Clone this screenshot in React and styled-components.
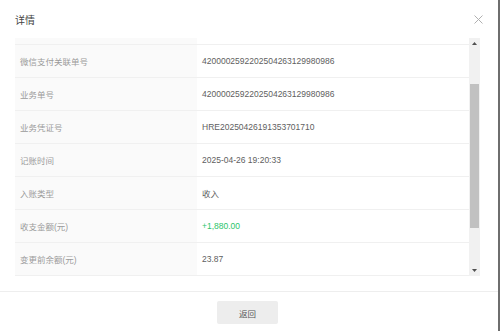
import React from 'react'
import styled, { createGlobalStyle } from 'styled-components'

///Styled Components

const GlobalStyle = createGlobalStyle`
    html, body {
        margin: 0;
        padding: 0;
        background: #ffffff;
    }
    body {
        font-family: "Liberation Sans", "Noto Sans CJK SC", Arial, sans-serif;
    }
`

const Modal = styled.div`
    width: 498px;
    height: 331px;
    display: flex;
    flex-direction: column;
    background: #ffffff;
    border-right: 2px solid #6e6e6e;
`

const Header = styled.div`
    height: 38px;
    flex: none;
    display: flex;
    align-items: center;
    justify-content: space-between;
    padding: 0 15px;
`

const Title = styled.h4`
    margin: 0;
    font-family: "Noto Sans CJK SC", sans-serif;
    font-size: 10px;
    font-weight: normal;
    color: #444;
`

const CloseButton = styled.button`
    border: 0;
    padding: 0;
    background: none;
    width: 9px;
    height: 9px;
    display: flex;
    cursor: pointer;
    color: #b0b0b0;
`

const Body = styled.div`
    display: flex;
    height: 238px;
    padding: 0 18px 0 15px;
`

const Table = styled.div`
    flex: 1;
    display: flex;
    flex-direction: column;
    overflow: hidden;
`

const DetailRow = styled.div`
    display: grid;
    grid-template-columns: 182px 1fr;
    height: ${props => props.height || 33}px;
    flex: none;
    box-sizing: border-box;
    border-bottom: 1px solid #f0f0f0;
    font-size: 8.5px;
`

const Label = styled.div`
    display: flex;
    align-items: center;
    padding-left: 5px;
    background: #fafafa;
    color: #9a9a9a;
`

const Value = styled.div`
    display: flex;
    align-items: center;
    padding-left: 5px;
    color: ${props => props.green ? '#2cc56c' : '#606060'};
`

const ScrollBar = styled.div`
    width: 11px;
    flex: none;
    display: flex;
    flex-direction: column;
    background: #f1f1f1;
`

const ScrollArrow = styled.div`
    height: 11px;
    flex: none;
    display: flex;
    align-items: center;
    justify-content: center;
    color: #505050;
`

const ScrollTrack = styled.div`
    flex: 1;
    padding: 0 1px;
`

const ScrollThumb = styled.div`
    background: #c1c1c1;
`

const Footer = styled.div`
    margin-top: 15px;
    border-top: 1px solid #eeeeee;
    display: flex;
    justify-content: center;
    padding: 9px 3px 0 0;
`

const BackButton = styled.button`
    width: 61px;
    height: 23px;
    border: 0;
    border-radius: 2px;
    background: #ededed;
    color: #555;
    font-family: "Noto Sans CJK SC", sans-serif;
    font-size: 8.5px;
    cursor: pointer;
`
///End of Styled Components

const details = [
    { label: '微信支付关联单号', value: '4200002592202504263129980986' },
    { label: '业务单号', value: '4200002592202504263129980986' },
    { label: '业务凭证号', value: 'HRE20250426191353701710' },
    { label: '记账时间', value: '2025-04-26 19:20:33' },
    { label: '入账类型', value: '收入' },
    { label: '收支金额(元)', value: '+1,880.00', green: true },
    { label: '变更前余额(元)', value: '23.87' },
]

// list is scrolled: 59px of 363px, 238px visible
const trackLength = 216
const thumbTop = Math.round(59 / 363 * trackLength)
const thumbHeight = Math.round(238 / 363 * trackLength) + 2

export default function App() {
    return (
        <>
            <GlobalStyle />
            <Modal>
                <Header>
                    <Title>详情</Title>
                    <CloseButton aria-label="close">
                        <svg width="9" height="9" viewBox="0 0 9 9">
                            <path d="M0.5 0.5 L8.5 8.5 M8.5 0.5 L0.5 8.5" stroke="currentColor" strokeWidth="1" fill="none" />
                        </svg>
                    </CloseButton>
                </Header>
                <Body>
                    <Table>
                        <DetailRow height={7}>
                            <Label />
                            <Value />
                        </DetailRow>
                        {details.map(item => (
                            <DetailRow key={item.label}>
                                <Label>{item.label}</Label>
                                <Value green={item.green}>{item.value}</Value>
                            </DetailRow>
                        ))}
                    </Table>
                    <ScrollBar>
                        <ScrollArrow>
                            <svg width="5" height="3" viewBox="0 0 5 3">
                                <polygon points="2.5,0 5,3 0,3" fill="currentColor" />
                            </svg>
                        </ScrollArrow>
                        <ScrollTrack>
                            <ScrollThumb style={{ marginTop: thumbTop, height: thumbHeight }} />
                        </ScrollTrack>
                        <ScrollArrow>
                            <svg width="5" height="3" viewBox="0 0 5 3">
                                <polygon points="0,0 5,0 2.5,3" fill="currentColor" />
                            </svg>
                        </ScrollArrow>
                    </ScrollBar>
                </Body>
                <Footer>
                    <BackButton>返回</BackButton>
                </Footer>
            </Modal>
        </>
    )
}
